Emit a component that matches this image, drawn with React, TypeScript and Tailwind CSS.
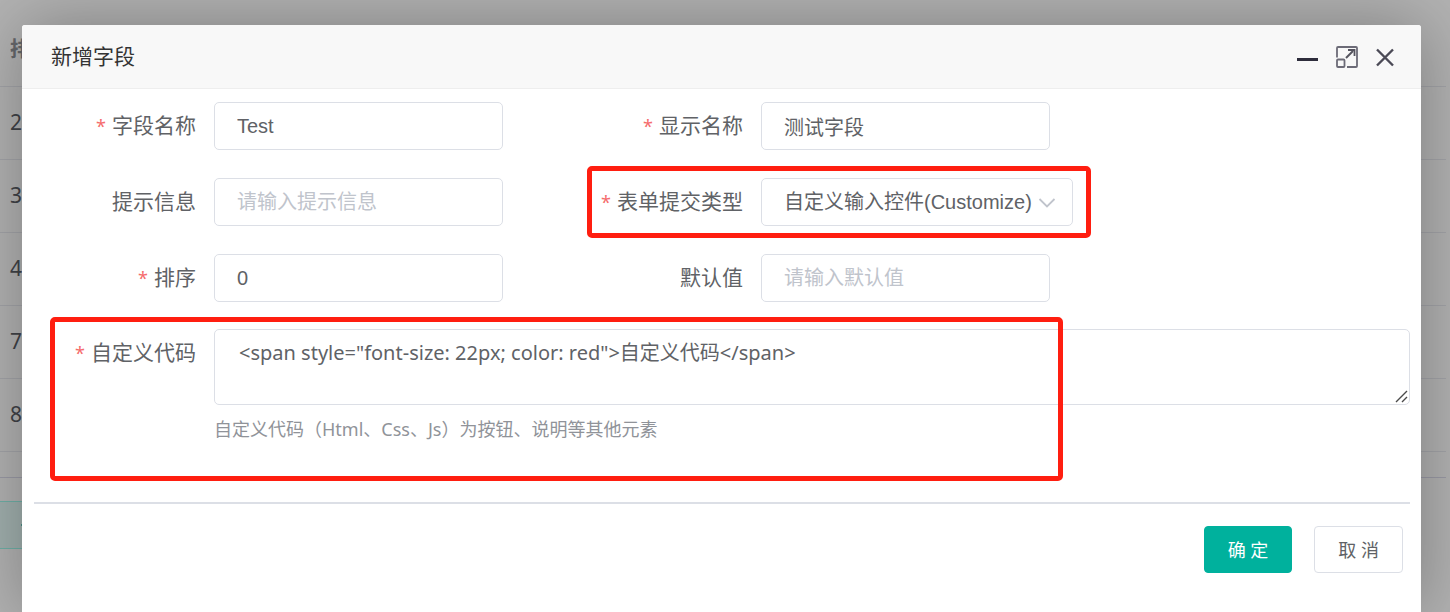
import type { InputHTMLAttributes, ReactNode } from 'react'

const LATIN = "font-['Noto_Sans','Noto_Sans_CJK_SC',sans-serif]"
const CONTROL =
  'rounded-[5px] border border-[#dcdfe6] bg-white text-xl text-[#606266] outline-none placeholder:text-[#c0c4cc]'
const INPUT = `${CONTROL} h-12 pl-[22px] font-['Liberation_Sans','Noto_Sans_CJK_SC',sans-serif]`

const rows = ['2', '3', '4', '7', '8']

interface IFieldProps {
  id: string
  label: string
  required?: boolean
  children: ReactNode
}

const Field = ({ id, label, required, children }: IFieldProps) => (
  <div className="relative flex items-start">
    <label
      htmlFor={id}
      className="w-[180px] shrink-0 pr-[18px] text-right text-[21px] leading-[46px] text-[#606266]"
    >
      {required && <span className="mr-1.5 text-lg leading-none text-[#f56c6c]">*</span>}
      {label}
    </label>
    {children}
  </div>
)

const TextInput = (props: InputHTMLAttributes<HTMLInputElement>) => (
  <input type="text" className={`${INPUT} w-[289px] pr-[22px]`} {...props} />
)

const PageBehind = () => (
  <div className="absolute inset-0 overflow-hidden bg-[#b2b2b2] pt-3 pr-1">
    <table className="w-full border-collapse text-left text-[21px] text-[#404247]">
      <thead>
        <tr className="h-[74px] border-b border-[#a3a4a8] text-[#65676b]">
          <th className="pl-[10px] font-bold">排序</th>
        </tr>
      </thead>
      <tbody>
        {rows.map((row) => (
          <tr key={row} className="h-[73px] border-b border-[#a3a4a8]">
            <td className="pl-[10px]">{row}</td>
          </tr>
        ))}
      </tbody>
    </table>
    <div className="mt-[25px] border-t border-[#9a9aa5]" />
    <button
      type="button"
      aria-label="添加"
      className="mt-[23px] flex h-12 w-14 items-center border-y border-[#6fb0a7] bg-[#a1b0ae] pl-[21px] text-[#2c8279]"
    >
      <svg viewBox="0 0 16 16" className="h-4 w-4" stroke="currentColor" strokeWidth="1.5">
        <path d="M0 8h16M8 0v16" />
      </svg>
    </button>
  </div>
)

const WindowActions = () => (
  <div className="flex items-center gap-[18px] text-[#2e2d3c]">
    <button type="button" aria-label="最小化">
      <svg width="21" height="22" viewBox="0 0 21 22">
        <path d="M0 13.5h21" stroke="currentColor" strokeWidth="3" />
      </svg>
    </button>
    <button type="button" aria-label="最大化">
      <svg width="22" height="22" viewBox="0 0 22 22" fill="none" stroke="#6c6b77" strokeWidth="1.8">
        <path d="M1 11.500V2a1 1 0 0 1 1-1h18a1 1 0 0 1 1 1v18a1 1 0 0 1-1 1h-9" />
        <rect x="1" y="13.500" width="7.500" height="7.500" rx="1" />
        <path d="M10 12l7-7" stroke="#55545f" strokeWidth="2" />
        <path d="M12 4h6.500v6" stroke="#55545f" />
      </svg>
    </button>
    <button type="button" aria-label="关闭">
      <svg width="18" height="22" viewBox="0 0 18 22" fill="none" stroke="#4b4a56" strokeWidth="2.4">
        <path d="M1 3.500l16 16M17 3.500l-16 16" />
      </svg>
    </button>
  </div>
)

const App = () => (
  <div className={`relative flex min-h-screen overflow-hidden pt-[25px] pr-[29px] pl-[22px] ${LATIN}`}>
    <PageBehind />
    <section
      role="dialog"
      aria-labelledby="dialog-title"
      className="relative flex-1 rounded-t-[3px] bg-white shadow-[1px_1px_68px_rgba(0,0,0,0.3)]"
    >
      <header className="flex h-16 items-center justify-between rounded-t-[3px] border-b border-[#eeeeee] bg-[#f8f8f8] pr-[27px] pl-[29px]">
        <h1 id="dialog-title" className="text-[21px] text-[#333333]">
          新增字段
        </h1>
        <WindowActions />
      </header>

      <form className="pt-[13px] pr-[11px] pl-3" onSubmit={(e) => e.preventDefault()}>
        <div className="grid grid-cols-[auto_1fr] justify-items-start gap-x-[78px] gap-y-7">
          <Field id="name" label="字段名称" required>
            <TextInput id="name" defaultValue="Test" />
          </Field>
          <Field id="title" label="显示名称" required>
            <TextInput id="title" defaultValue="测试字段" />
          </Field>
          <Field id="tip" label="提示信息">
            <TextInput id="tip" placeholder="请输入提示信息" />
          </Field>
          <Field id="type" label="表单提交类型" required>
            <div className="relative">
              <select id="type" className={`${INPUT} w-[312px] appearance-none`}>
                <option>自定义输入控件(Customize)</option>
              </select>
              <svg
                viewBox="0 0 18 10"
                className="pointer-events-none absolute top-5 right-[17px] h-[10px] w-[18px]"
                fill="none"
                stroke="#c0c4cc"
                strokeWidth="1.8"
              >
                <path d="M1.500 1L9 8.500 16.500 1" />
              </svg>
            </div>
            <div className="pointer-events-none absolute -inset-y-3 -right-[18px] left-1.5 rounded-[5px] border-5 border-[#ff1e10]" />
          </Field>
          <Field id="sort" label="排序" required>
            <TextInput id="sort" defaultValue="0" />
          </Field>
          <Field id="default" label="默认值">
            <TextInput id="default" placeholder="请输入默认值" />
          </Field>
        </div>

        <div className="mt-[27px]">
          <Field id="code" label="自定义代码" required>
            <div className="flex-1">
              <div className="relative">
                <textarea
                  id="code"
                  className={`${CONTROL} block h-[76px] w-full resize-none px-6 py-[7px] leading-[32px]`}
                  defaultValue={'<span style="font-size: 22px; color: red">自定义代码</span>'}
                />
                <svg
                  viewBox="0 0 13 13"
                  className="pointer-events-none absolute right-0.5 bottom-0.5 h-[13px] w-[13px]"
                  stroke="#4a4a4a"
                  strokeWidth="1.4"
                >
                  <path d="M1 12L12 1M7 12l5-5" />
                </svg>
              </div>
              <p className="pt-[11px] pb-[59px] text-lg leading-[27px] text-[#909399]">
                自定义代码（Html、Css、Js）为按钮、说明等其他元素
              </p>
            </div>
            <div className="pointer-events-none absolute -top-3 left-4 h-[164px] w-[1013px] rounded-[5px] border-5 border-[#ff1e10]" />
          </Field>
        </div>

        <footer className="flex justify-end gap-[22px] border-t-2 border-[#dcdfe6] pt-[22px] pr-[7px] pb-10 text-lg">
          <button type="submit" className="h-[47px] rounded-[4px] border border-[#00b19d] bg-[#00b19d] px-[23px] text-white">
            确 定
          </button>
          <button type="button" className="h-[47px] rounded-[4px] border border-[#dcdfe6] bg-white px-[23px] text-[#606266]">
            取 消
          </button>
        </footer>
      </form>
    </section>
  </div>
)

export default App
